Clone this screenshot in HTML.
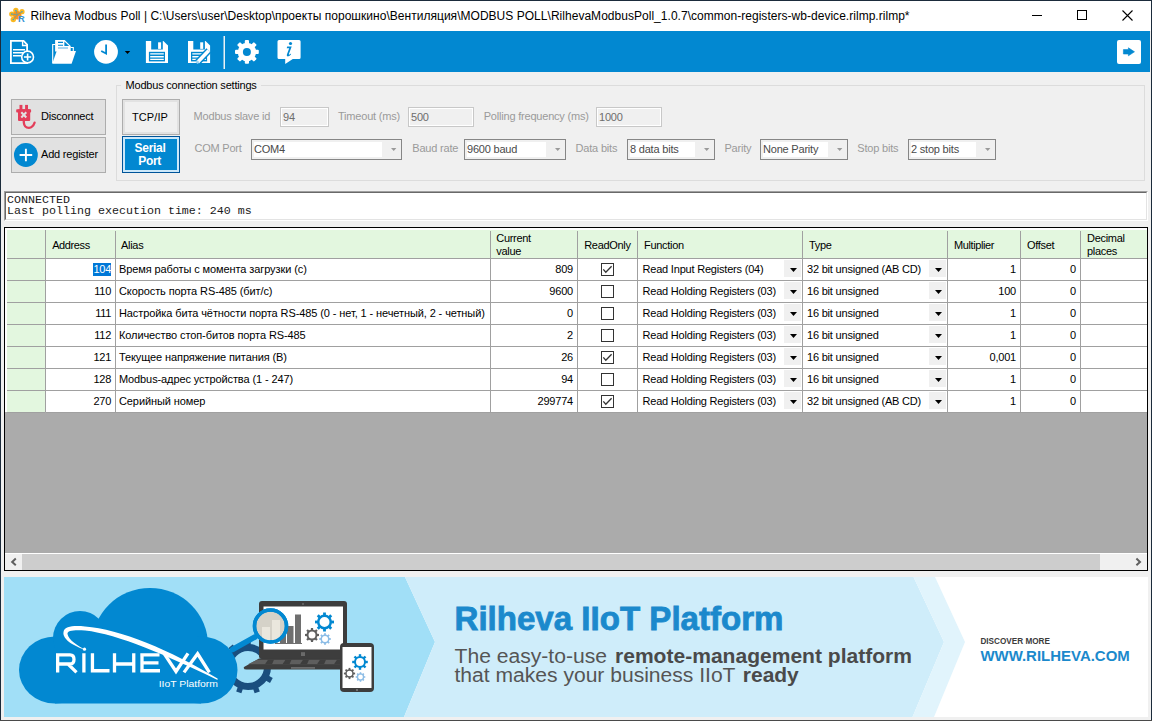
<!DOCTYPE html>
<html><head><meta charset="utf-8">
<style>
*{box-sizing:border-box;margin:0;padding:0}
html,body{width:1152px;height:721px;overflow:hidden;background:#F0F0F0}
body{position:relative;font-family:"Liberation Sans",sans-serif;font-size:11px;color:#000}
.a{position:absolute}
.t{position:absolute;white-space:nowrap}
svg{position:absolute;overflow:visible}
</style></head><body>
<div class="a" style="left:0px;top:0px;width:1152px;height:1px;background:#1b2b3b;"></div>
<div class="a" style="left:0px;top:0px;width:1px;height:721px;background:#1b2b3b;"></div>
<div class="a" style="left:1151px;top:0px;width:1px;height:721px;background:#1b2b3b;"></div>
<div class="a" style="left:0px;top:720px;width:1152px;height:1px;background:#4a4a4a;"></div>
<div class="a" style="left:1px;top:1px;width:1150px;height:30px;background:#fff;"></div>
<svg style="left:0;top:0" width="40" height="30" viewBox="0 0 40 30"><g fill="#FBB820"><circle cx="15.9" cy="10.5" r="2.7"/><circle cx="22" cy="11.7" r="2.6"/><circle cx="11.8" cy="14.1" r="2.7"/><circle cx="13.3" cy="19.5" r="2.7"/></g><g fill="#F7941D"><circle cx="17.3" cy="15.2" r="4.2"/></g><path d="M15.9 10.5 L17.3 14.8 L22 11.7 M11.8 14.1 L17.3 14.8 L13.3 19.5" stroke="#4A9FB8" stroke-width="0.7" fill="none"/><g fill="#4A9FB8"><circle cx="15.9" cy="10.5" r="0.8"/><circle cx="22" cy="11.7" r="0.8"/><circle cx="11.8" cy="14.1" r="0.8"/><circle cx="13.3" cy="19.5" r="0.8"/></g><text x="18" y="22" font-family="Liberation Sans" font-weight="700" font-size="8.2" fill="#3A95D5" textLength="6.8" lengthAdjust="spacingAndGlyphs">R</text></svg>
<div class="t" style="left:30.6px;top:9.64px;font-size:12px;line-height:12px;color:#000;letter-spacing:0.03px;">Rilheva Modbus Poll | C:\Users\user\Desktop\проекты порошкино\Вентиляция\MODBUS POLL\RilhevaModbusPoll_1.0.7\common-registers-wb-device.rilmp.rilmp*</div>
<div class="a" style="left:1032px;top:15px;width:10px;height:1px;background:#000;"></div>
<div class="a" style="left:1077px;top:10px;width:10px;height:10px;border:1px solid #000;"></div>
<svg style="left:1122px;top:10px" width="11" height="11"><path d="M0.5 0.5L10.5 10.5M10.5 0.5L0.5 10.5" stroke="#000" stroke-width="1.1"/></svg>
<div class="a" style="left:1px;top:31px;width:1149px;height:41px;background:#0288D1;"></div>
<div class="a" style="left:1117px;top:40px;width:24px;height:24px;background:#fff;border-radius:2px"></div>
<svg style="left:0;top:0" width="1152" height="72" viewBox="0 0 1152 72"><path d="M10.9 40.9 H23.6 L27.1 44.5 V63.1 H10.9 Z" fill="none" stroke="#fff" stroke-width="1.8"/><path d="M22.6 41 V45.5 H27" fill="none" stroke="#fff" stroke-width="1.4"/><path d="M13 49.8 H25 M13 52.8 H23 M13 55.8 H21.5" stroke="#fff" stroke-width="1.5"/><circle cx="27.6" cy="57" r="5.9" fill="#0288D1" stroke="#fff" stroke-width="1.6"/><path d="M24 57 H31.2 M27.6 53.6 V60.6" stroke="#fff" stroke-width="1.6"/><path d="M52.7 63 V44.5 H55.5 M70.5 47.5 H73.3 V51" fill="none" stroke="#fff" stroke-width="1.1"/><path d="M55.1 40 H64.7 L70.7 46 V51.5 H55.1 Z" fill="#fff"/><path d="M64.4 41.5 V46 H69.2 Z" fill="#0288D1"/><path d="M58 42.4 H63 M58 45.3 H63" stroke="#0288D1" stroke-width="1.1"/><path d="M58 48 H68" stroke="#7CC0E8" stroke-width="1.3"/><path d="M56.7 51.1 H76 L71.6 63.8 H52.2 Z" fill="#fff"/><circle cx="106" cy="51.8" r="11.9" fill="#fff"/><path d="M106.1 44.4 V53.6 L101.2 51" fill="none" stroke="#0288D1" stroke-width="1.8"/><path d="M124.8 51 H130.2 L127.5 54.1 Z" fill="#000"/><path d="M145.9 41 H163.4 L168 45.4 V63 H145.9 Z" fill="#fff"/><rect x="151.2" y="40.5" width="11.6" height="9" fill="#0288D1"/><rect x="158.1" y="42.3" width="3" height="6.6" fill="#fff"/><rect x="148.9" y="51.8" width="16.1" height="9.6" fill="#0288D1"/><path d="M150.2 53.9 H163.8 M150.2 56.7 H163.8 M150.2 59.4 H163.8" stroke="#fff" stroke-width="1.4"/><path d="M188.0 41 H205.5 L210.1 45.4 V63 H188.0 Z" fill="#fff"/><rect x="193.29999999999998" y="40.5" width="11.6" height="9" fill="#0288D1"/><rect x="200.2" y="42.3" width="3" height="6.6" fill="#fff"/><rect x="191.0" y="51.8" width="16.1" height="9.6" fill="#0288D1"/><path d="M192.29999999999998 53.9 H205.9 M192.29999999999998 56.7 H205.9 M192.29999999999998 59.4 H205.9" stroke="#fff" stroke-width="1.4"/><path d="M197.6 62.2 L208.8 50.6" stroke="#0288D1" stroke-width="6.5"/><path d="M197.6 62.2 L208.8 50.6" stroke="#fff" stroke-width="3.6"/><path d="M196.5 63.2 L198.4 61.2" stroke="#9FD3F0" stroke-width="2.5"/><rect x="223.5" y="36" width="1.5" height="33" fill="#EAF2F5"/><g><rect x="244.80" y="40.00" width="4.2" height="5" rx="1" fill="#fff" transform="rotate(0 246.9 51.9)"/><rect x="244.80" y="40.00" width="4.2" height="5" rx="1" fill="#fff" transform="rotate(45 246.9 51.9)"/><rect x="244.80" y="40.00" width="4.2" height="5" rx="1" fill="#fff" transform="rotate(90 246.9 51.9)"/><rect x="244.80" y="40.00" width="4.2" height="5" rx="1" fill="#fff" transform="rotate(135 246.9 51.9)"/><rect x="244.80" y="40.00" width="4.2" height="5" rx="1" fill="#fff" transform="rotate(180 246.9 51.9)"/><rect x="244.80" y="40.00" width="4.2" height="5" rx="1" fill="#fff" transform="rotate(225 246.9 51.9)"/><rect x="244.80" y="40.00" width="4.2" height="5" rx="1" fill="#fff" transform="rotate(270 246.9 51.9)"/><rect x="244.80" y="40.00" width="4.2" height="5" rx="1" fill="#fff" transform="rotate(315 246.9 51.9)"/><circle cx="246.9" cy="51.9" r="9.2" fill="#fff"/><circle cx="246.9" cy="51.9" r="4" fill="#0288D1"/></g><path d="M279 40 H299.1 Q300.6 40 300.6 41.5 V57.5 Q300.6 59 299.1 59 H292.8 L285.2 64 V59 H279 Q277.5 59 277.5 57.5 V41.5 Q277.5 40 279 40 Z" fill="#fff"/><circle cx="290.5" cy="43.5" r="1.6" fill="#0288D1"/><path d="M287.2 46.6 H291.7 L288.9 54.1 Q288.7 54.9 289.5 54.5 L291.1 53.5 L290.8 54.8 Q289.2 56.4 287.7 56.4 Q286.3 56.2 286.9 54.6 L289.2 48.2 H286.7 Z" fill="#0288D1"/><path d="M1123.4 49.6 H1128.4 V47.8 L1134.5 51.8 L1128.4 55.8 V54 H1123.4 Z" fill="#0288D1" stroke="#0288D1" stroke-width="0.6" stroke-linejoin="round"/></svg>
<div class="a" style="left:11px;top:99px;width:95px;height:36px;background:#E1E1E1;border:1px solid #ADADAD;"></div>
<div class="t" style="left:41px;top:110.99px;font-size:11px;line-height:11px;color:#000;letter-spacing:-0.2px;">Disconnect</div>
<div class="a" style="left:11px;top:137px;width:95px;height:36px;background:#E1E1E1;border:1px solid #ADADAD;"></div>
<div class="t" style="left:41px;top:149.09px;font-size:11px;line-height:11px;color:#000;letter-spacing:-0.2px;">Add register</div>
<svg style="left:0;top:0" width="60" height="180" viewBox="0 0 60 180"><g fill="#E33E5A"><rect x="19.5" y="104.9" width="2.9" height="5"/><rect x="25.1" y="104.9" width="2.9" height="5"/><rect x="16.2" y="109.3" width="14.9" height="3.3" rx="0.8"/><rect x="18" y="109.3" width="12.2" height="11.6" rx="1"/></g><path d="M21.3 112.3 L26.3 117.5 M26.3 112.3 L21.3 117.5" stroke="#E1E1E1" stroke-width="2"/><path d="M23.8 120.5 V122.5 Q24.2 127.8 28.9 127.9 Q32.8 127.6 34.6 122.6" fill="none" stroke="#E33E5A" stroke-width="2.3" stroke-linecap="round"/><circle cx="25.9" cy="155" r="11.9" fill="#0288D1"/><path d="M19.6 155 H32.2 M25.9 148.7 V161.3" stroke="#fff" stroke-width="1.9"/></svg>
<div class="a" style="left:116px;top:85px;width:1029px;height:96px;border:1px solid #DCDCDC;"></div>
<div class="a" style="left:121px;top:80px;width:140px;height:10px;background:#F0F0F0;"></div>
<div class="t" style="left:125.5px;top:80.29px;font-size:11px;line-height:11px;color:#000;letter-spacing:-0.2px;">Modbus connection settings</div>
<div class="a" style="left:122px;top:99px;width:58px;height:36px;background:#F0F0F0;border:1px solid #ADADAD;"></div>
<div class="a" style="left:123px;top:100px;width:56px;height:34px;border:2px solid #E2E2E2;"></div>
<div class="t" style="left:132px;top:112.39px;font-size:11px;line-height:11px;color:#000;letter-spacing:0.1px;">TCP/IP</div>
<div class="a" style="left:122px;top:136px;width:58px;height:37px;background:#0288D1;border:1px solid #005499;"></div>
<div class="a" style="left:123px;top:137px;width:56px;height:35px;border:2px solid #CCE8FA;"></div>
<div class="t" style="left:134.6px;top:141.74px;font-size:12px;line-height:12px;color:#fff;letter-spacing:-0.3px;font-weight:700;">Serial</div>
<div class="t" style="left:138.2px;top:154.54px;font-size:12px;line-height:12px;color:#fff;letter-spacing:-0.3px;font-weight:700;">Port</div>
<div class="t" style="left:193.6px;top:111.49px;font-size:11px;line-height:11px;color:#9a9a9a;letter-spacing:-0.2px;">Modbus slave id</div>
<div class="a" style="left:280px;top:107px;width:49px;height:20px;background:#F0F0F0;border:1px solid #C8C8C8;"></div>
<div class="a" style="left:281px;top:108px;width:47px;height:18px;border:1px solid #FFFFFF;"></div>
<div class="t" style="left:283px;top:111.69px;font-size:11px;line-height:11px;color:#6D6D6D;letter-spacing:-0.2px;">94</div>
<div class="t" style="left:338px;top:111.49px;font-size:11px;line-height:11px;color:#9a9a9a;letter-spacing:-0.2px;">Timeout (ms)</div>
<div class="a" style="left:408px;top:107px;width:66px;height:20px;background:#F0F0F0;border:1px solid #C8C8C8;"></div>
<div class="a" style="left:409px;top:108px;width:64px;height:18px;border:1px solid #FFFFFF;"></div>
<div class="t" style="left:411px;top:111.69px;font-size:11px;line-height:11px;color:#6D6D6D;letter-spacing:-0.2px;">500</div>
<div class="t" style="left:483.7px;top:111.49px;font-size:11px;line-height:11px;color:#9a9a9a;letter-spacing:-0.2px;">Polling frequency (ms)</div>
<div class="a" style="left:596px;top:107px;width:66px;height:20px;background:#F0F0F0;border:1px solid #C8C8C8;"></div>
<div class="a" style="left:597px;top:108px;width:64px;height:18px;border:1px solid #FFFFFF;"></div>
<div class="t" style="left:599px;top:111.69px;font-size:11px;line-height:11px;color:#6D6D6D;letter-spacing:-0.2px;">1000</div>
<div class="t" style="left:194.4px;top:143.49px;font-size:11px;line-height:11px;color:#9a9a9a;letter-spacing:-0.2px;">COM Port</div>
<div class="a" style="left:251px;top:139px;width:151px;height:21px;background:#F0F0F0;border:1px solid #868686;"></div>
<div class="a" style="left:254px;top:142px;width:128px;height:15px;background:#fff;"></div>
<svg style="left:390.8px;top:148px" width="6" height="4"><path d="M0 0H5.4L2.7 3Z" fill="#9a9a9a"/></svg>
<div class="t" style="left:254px;top:144.39px;font-size:11px;line-height:11px;color:#4a4a4a;letter-spacing:-0.2px;">COM4</div>
<div class="t" style="left:412.3px;top:143.49px;font-size:11px;line-height:11px;color:#9a9a9a;letter-spacing:-0.2px;">Baud rate</div>
<div class="a" style="left:464px;top:139px;width:102px;height:21px;background:#F0F0F0;border:1px solid #868686;"></div>
<div class="a" style="left:467px;top:142px;width:79px;height:15px;background:#fff;"></div>
<svg style="left:554.8px;top:148px" width="6" height="4"><path d="M0 0H5.4L2.7 3Z" fill="#9a9a9a"/></svg>
<div class="t" style="left:467px;top:144.39px;font-size:11px;line-height:11px;color:#4a4a4a;letter-spacing:-0.2px;">9600 baud</div>
<div class="t" style="left:575.6px;top:143.49px;font-size:11px;line-height:11px;color:#9a9a9a;letter-spacing:-0.2px;">Data bits</div>
<div class="a" style="left:627px;top:139px;width:88px;height:21px;background:#F0F0F0;border:1px solid #868686;"></div>
<div class="a" style="left:630px;top:142px;width:65px;height:15px;background:#fff;"></div>
<svg style="left:703.8px;top:148px" width="6" height="4"><path d="M0 0H5.4L2.7 3Z" fill="#9a9a9a"/></svg>
<div class="t" style="left:630px;top:144.39px;font-size:11px;line-height:11px;color:#4a4a4a;letter-spacing:-0.2px;">8 data bits</div>
<div class="t" style="left:724.4px;top:143.49px;font-size:11px;line-height:11px;color:#9a9a9a;letter-spacing:-0.2px;">Parity</div>
<div class="a" style="left:760px;top:139px;width:88px;height:21px;background:#F0F0F0;border:1px solid #868686;"></div>
<div class="a" style="left:763px;top:142px;width:65px;height:15px;background:#fff;"></div>
<svg style="left:836.8px;top:148px" width="6" height="4"><path d="M0 0H5.4L2.7 3Z" fill="#9a9a9a"/></svg>
<div class="t" style="left:763px;top:144.39px;font-size:11px;line-height:11px;color:#4a4a4a;letter-spacing:-0.2px;">None Parity</div>
<div class="t" style="left:857.3px;top:143.49px;font-size:11px;line-height:11px;color:#9a9a9a;letter-spacing:-0.2px;">Stop bits</div>
<div class="a" style="left:908px;top:139px;width:88px;height:21px;background:#F0F0F0;border:1px solid #868686;"></div>
<div class="a" style="left:911px;top:142px;width:65px;height:15px;background:#fff;"></div>
<svg style="left:984.8px;top:148px" width="6" height="4"><path d="M0 0H5.4L2.7 3Z" fill="#9a9a9a"/></svg>
<div class="t" style="left:911px;top:144.39px;font-size:11px;line-height:11px;color:#4a4a4a;letter-spacing:-0.2px;">2 stop bits</div>
<div class="a" style="left:4px;top:191px;width:1144px;height:30px;background:#fff;border-top:1px solid #A0A0A0;border-left:1px solid #A0A0A0;border-right:1px solid #FFFFFF;border-bottom:1px solid #FFFFFF"></div>
<div class="a" style="left:5px;top:192px;width:1142px;height:28px;border-top:1px solid #696969;border-left:1px solid #696969;border-right:1px solid #E3E3E3;border-bottom:1px solid #E3E3E3"></div>
<div class="t" style="left:7px;top:195.3px;font-family:'Liberation Mono',monospace;font-size:11.67px;line-height:11px;white-space:pre;color:#1a1a1a">CONNECTED
Last polling execution time: 240 ms</div>
<div class="a" style="left:4px;top:227px;width:1144px;height:344px;background:#ABABAB;border:1px solid #000;"></div>
<div class="a" style="left:5px;top:228px;width:1142px;height:30px;background:#E3F7DF;"></div>
<div class="a" style="left:5px;top:258px;width:1142px;height:1px;background:#A0A0A0;"></div>
<div class="a" style="left:5px;top:228px;width:1142px;height:2px;background:#fff;"></div>
<div class="a" style="left:5px;top:228px;width:2px;height:184px;background:#fff;"></div>
<div class="a" style="left:45px;top:231px;width:1px;height:27px;background:#A0A0A0;"></div>
<div class="a" style="left:115px;top:231px;width:1px;height:27px;background:#A0A0A0;"></div>
<div class="a" style="left:490px;top:231px;width:1px;height:27px;background:#A0A0A0;"></div>
<div class="a" style="left:577px;top:231px;width:1px;height:27px;background:#A0A0A0;"></div>
<div class="a" style="left:637px;top:231px;width:1px;height:27px;background:#A0A0A0;"></div>
<div class="a" style="left:802px;top:231px;width:1px;height:27px;background:#A0A0A0;"></div>
<div class="a" style="left:947px;top:231px;width:1px;height:27px;background:#A0A0A0;"></div>
<div class="a" style="left:1020px;top:231px;width:1px;height:27px;background:#A0A0A0;"></div>
<div class="a" style="left:1080px;top:231px;width:1px;height:27px;background:#A0A0A0;"></div>
<div class="a" style="left:7px;top:259px;width:38px;height:153px;background:#E3F7DF;"></div>
<div class="a" style="left:45px;top:230px;width:1px;height:182px;background:#A0A0A0;"></div>
<div class="a" style="left:46px;top:259px;width:1101px;height:21px;background:#fff;"></div>
<div class="a" style="left:46px;top:280px;width:1101px;height:1px;background:#A0A0A0;"></div>
<div class="a" style="left:7px;top:280px;width:38px;height:1px;background:#A0A0A0;"></div>
<div class="a" style="left:115px;top:259px;width:1px;height:22px;background:#A0A0A0;"></div>
<div class="a" style="left:490px;top:259px;width:1px;height:22px;background:#A0A0A0;"></div>
<div class="a" style="left:577px;top:259px;width:1px;height:22px;background:#A0A0A0;"></div>
<div class="a" style="left:637px;top:259px;width:1px;height:22px;background:#A0A0A0;"></div>
<div class="a" style="left:802px;top:259px;width:1px;height:22px;background:#A0A0A0;"></div>
<div class="a" style="left:947px;top:259px;width:1px;height:22px;background:#A0A0A0;"></div>
<div class="a" style="left:1020px;top:259px;width:1px;height:22px;background:#A0A0A0;"></div>
<div class="a" style="left:1080px;top:259px;width:1px;height:22px;background:#A0A0A0;"></div>
<div class="a" style="left:93px;top:263px;width:18px;height:13px;background:#0078D7;"></div>
<div class="t" style="right:1041px;top:264.39px;font-size:11px;line-height:11px;color:#fff;letter-spacing:-0.3px;">104</div>
<div class="t" style="left:119px;top:264.39px;font-size:11px;line-height:11px;color:#000;letter-spacing:-0.1px;">Время работы с момента загрузки (с)</div>
<div class="t" style="right:579px;top:264.39px;font-size:11px;line-height:11px;color:#000;letter-spacing:-0.2px;">809</div>
<div class="a" style="left:601px;top:263px;width:13px;height:13px;background:#fff;border:1px solid #333;"></div>
<svg style="left:601px;top:263px" width="13" height="13"><path d="M2.3 6.4L4.8 9.2L10.6 3.2" fill="none" stroke="#333" stroke-width="1.3"/></svg>
<div class="t" style="left:642.5px;top:264.39px;font-size:11px;line-height:11px;color:#000;letter-spacing:-0.2px;">Read Input Registers (04)</div>
<div class="a" style="left:784px;top:260px;width:17px;height:17px;background:#F0F0F0;"></div>
<svg style="left:789.8px;top:268px" width="7" height="4"><path d="M0 0H7L3.5 4Z" fill="#000"/></svg>
<div class="t" style="left:807px;top:264.39px;font-size:11px;line-height:11px;color:#000;letter-spacing:-0.2px;">32 bit unsigned (AB CD)</div>
<div class="a" style="left:929px;top:260px;width:17px;height:17px;background:#F0F0F0;"></div>
<svg style="left:934.8px;top:268px" width="7" height="4"><path d="M0 0H7L3.5 4Z" fill="#000"/></svg>
<div class="t" style="right:136px;top:264.39px;font-size:11px;line-height:11px;color:#000;letter-spacing:-0.2px;">1</div>
<div class="t" style="right:76px;top:264.39px;font-size:11px;line-height:11px;color:#000;letter-spacing:-0.2px;">0</div>
<div class="a" style="left:46px;top:281px;width:1101px;height:21px;background:#fff;"></div>
<div class="a" style="left:46px;top:302px;width:1101px;height:1px;background:#A0A0A0;"></div>
<div class="a" style="left:7px;top:302px;width:38px;height:1px;background:#A0A0A0;"></div>
<div class="a" style="left:115px;top:281px;width:1px;height:22px;background:#A0A0A0;"></div>
<div class="a" style="left:490px;top:281px;width:1px;height:22px;background:#A0A0A0;"></div>
<div class="a" style="left:577px;top:281px;width:1px;height:22px;background:#A0A0A0;"></div>
<div class="a" style="left:637px;top:281px;width:1px;height:22px;background:#A0A0A0;"></div>
<div class="a" style="left:802px;top:281px;width:1px;height:22px;background:#A0A0A0;"></div>
<div class="a" style="left:947px;top:281px;width:1px;height:22px;background:#A0A0A0;"></div>
<div class="a" style="left:1020px;top:281px;width:1px;height:22px;background:#A0A0A0;"></div>
<div class="a" style="left:1080px;top:281px;width:1px;height:22px;background:#A0A0A0;"></div>
<div class="t" style="right:1041px;top:286.39px;font-size:11px;line-height:11px;color:#000;letter-spacing:-0.3px;">110</div>
<div class="t" style="left:119px;top:286.39px;font-size:11px;line-height:11px;color:#000;letter-spacing:-0.1px;">Скорость порта RS-485 (бит/с)</div>
<div class="t" style="right:579px;top:286.39px;font-size:11px;line-height:11px;color:#000;letter-spacing:-0.2px;">9600</div>
<div class="a" style="left:601px;top:285px;width:13px;height:13px;background:#fff;border:1px solid #333;"></div>
<div class="t" style="left:642.5px;top:286.39px;font-size:11px;line-height:11px;color:#000;letter-spacing:-0.2px;">Read Holding Registers (03)</div>
<div class="a" style="left:784px;top:282px;width:17px;height:17px;background:#F0F0F0;"></div>
<svg style="left:789.8px;top:290px" width="7" height="4"><path d="M0 0H7L3.5 4Z" fill="#000"/></svg>
<div class="t" style="left:807px;top:286.39px;font-size:11px;line-height:11px;color:#000;letter-spacing:-0.2px;">16 bit unsigned</div>
<div class="a" style="left:929px;top:282px;width:17px;height:17px;background:#F0F0F0;"></div>
<svg style="left:934.8px;top:290px" width="7" height="4"><path d="M0 0H7L3.5 4Z" fill="#000"/></svg>
<div class="t" style="right:136px;top:286.39px;font-size:11px;line-height:11px;color:#000;letter-spacing:-0.2px;">100</div>
<div class="t" style="right:76px;top:286.39px;font-size:11px;line-height:11px;color:#000;letter-spacing:-0.2px;">0</div>
<div class="a" style="left:46px;top:303px;width:1101px;height:21px;background:#fff;"></div>
<div class="a" style="left:46px;top:324px;width:1101px;height:1px;background:#A0A0A0;"></div>
<div class="a" style="left:7px;top:324px;width:38px;height:1px;background:#A0A0A0;"></div>
<div class="a" style="left:115px;top:303px;width:1px;height:22px;background:#A0A0A0;"></div>
<div class="a" style="left:490px;top:303px;width:1px;height:22px;background:#A0A0A0;"></div>
<div class="a" style="left:577px;top:303px;width:1px;height:22px;background:#A0A0A0;"></div>
<div class="a" style="left:637px;top:303px;width:1px;height:22px;background:#A0A0A0;"></div>
<div class="a" style="left:802px;top:303px;width:1px;height:22px;background:#A0A0A0;"></div>
<div class="a" style="left:947px;top:303px;width:1px;height:22px;background:#A0A0A0;"></div>
<div class="a" style="left:1020px;top:303px;width:1px;height:22px;background:#A0A0A0;"></div>
<div class="a" style="left:1080px;top:303px;width:1px;height:22px;background:#A0A0A0;"></div>
<div class="t" style="right:1041px;top:308.39px;font-size:11px;line-height:11px;color:#000;letter-spacing:-0.3px;">111</div>
<div class="t" style="left:119px;top:308.39px;font-size:11px;line-height:11px;color:#000;letter-spacing:-0.1px;">Настройка бита чётности порта RS-485 (0 - нет, 1 - нечетный, 2 - четный)</div>
<div class="t" style="right:579px;top:308.39px;font-size:11px;line-height:11px;color:#000;letter-spacing:-0.2px;">0</div>
<div class="a" style="left:601px;top:307px;width:13px;height:13px;background:#fff;border:1px solid #333;"></div>
<div class="t" style="left:642.5px;top:308.39px;font-size:11px;line-height:11px;color:#000;letter-spacing:-0.2px;">Read Holding Registers (03)</div>
<div class="a" style="left:784px;top:304px;width:17px;height:17px;background:#F0F0F0;"></div>
<svg style="left:789.8px;top:312px" width="7" height="4"><path d="M0 0H7L3.5 4Z" fill="#000"/></svg>
<div class="t" style="left:807px;top:308.39px;font-size:11px;line-height:11px;color:#000;letter-spacing:-0.2px;">16 bit unsigned</div>
<div class="a" style="left:929px;top:304px;width:17px;height:17px;background:#F0F0F0;"></div>
<svg style="left:934.8px;top:312px" width="7" height="4"><path d="M0 0H7L3.5 4Z" fill="#000"/></svg>
<div class="t" style="right:136px;top:308.39px;font-size:11px;line-height:11px;color:#000;letter-spacing:-0.2px;">1</div>
<div class="t" style="right:76px;top:308.39px;font-size:11px;line-height:11px;color:#000;letter-spacing:-0.2px;">0</div>
<div class="a" style="left:46px;top:325px;width:1101px;height:21px;background:#fff;"></div>
<div class="a" style="left:46px;top:346px;width:1101px;height:1px;background:#A0A0A0;"></div>
<div class="a" style="left:7px;top:346px;width:38px;height:1px;background:#A0A0A0;"></div>
<div class="a" style="left:115px;top:325px;width:1px;height:22px;background:#A0A0A0;"></div>
<div class="a" style="left:490px;top:325px;width:1px;height:22px;background:#A0A0A0;"></div>
<div class="a" style="left:577px;top:325px;width:1px;height:22px;background:#A0A0A0;"></div>
<div class="a" style="left:637px;top:325px;width:1px;height:22px;background:#A0A0A0;"></div>
<div class="a" style="left:802px;top:325px;width:1px;height:22px;background:#A0A0A0;"></div>
<div class="a" style="left:947px;top:325px;width:1px;height:22px;background:#A0A0A0;"></div>
<div class="a" style="left:1020px;top:325px;width:1px;height:22px;background:#A0A0A0;"></div>
<div class="a" style="left:1080px;top:325px;width:1px;height:22px;background:#A0A0A0;"></div>
<div class="t" style="right:1041px;top:330.39px;font-size:11px;line-height:11px;color:#000;letter-spacing:-0.3px;">112</div>
<div class="t" style="left:119px;top:330.39px;font-size:11px;line-height:11px;color:#000;letter-spacing:-0.1px;">Количество стоп-битов порта RS-485</div>
<div class="t" style="right:579px;top:330.39px;font-size:11px;line-height:11px;color:#000;letter-spacing:-0.2px;">2</div>
<div class="a" style="left:601px;top:329px;width:13px;height:13px;background:#fff;border:1px solid #333;"></div>
<div class="t" style="left:642.5px;top:330.39px;font-size:11px;line-height:11px;color:#000;letter-spacing:-0.2px;">Read Holding Registers (03)</div>
<div class="a" style="left:784px;top:326px;width:17px;height:17px;background:#F0F0F0;"></div>
<svg style="left:789.8px;top:334px" width="7" height="4"><path d="M0 0H7L3.5 4Z" fill="#000"/></svg>
<div class="t" style="left:807px;top:330.39px;font-size:11px;line-height:11px;color:#000;letter-spacing:-0.2px;">16 bit unsigned</div>
<div class="a" style="left:929px;top:326px;width:17px;height:17px;background:#F0F0F0;"></div>
<svg style="left:934.8px;top:334px" width="7" height="4"><path d="M0 0H7L3.5 4Z" fill="#000"/></svg>
<div class="t" style="right:136px;top:330.39px;font-size:11px;line-height:11px;color:#000;letter-spacing:-0.2px;">1</div>
<div class="t" style="right:76px;top:330.39px;font-size:11px;line-height:11px;color:#000;letter-spacing:-0.2px;">0</div>
<div class="a" style="left:46px;top:347px;width:1101px;height:21px;background:#fff;"></div>
<div class="a" style="left:46px;top:368px;width:1101px;height:1px;background:#A0A0A0;"></div>
<div class="a" style="left:7px;top:368px;width:38px;height:1px;background:#A0A0A0;"></div>
<div class="a" style="left:115px;top:347px;width:1px;height:22px;background:#A0A0A0;"></div>
<div class="a" style="left:490px;top:347px;width:1px;height:22px;background:#A0A0A0;"></div>
<div class="a" style="left:577px;top:347px;width:1px;height:22px;background:#A0A0A0;"></div>
<div class="a" style="left:637px;top:347px;width:1px;height:22px;background:#A0A0A0;"></div>
<div class="a" style="left:802px;top:347px;width:1px;height:22px;background:#A0A0A0;"></div>
<div class="a" style="left:947px;top:347px;width:1px;height:22px;background:#A0A0A0;"></div>
<div class="a" style="left:1020px;top:347px;width:1px;height:22px;background:#A0A0A0;"></div>
<div class="a" style="left:1080px;top:347px;width:1px;height:22px;background:#A0A0A0;"></div>
<div class="t" style="right:1041px;top:352.39px;font-size:11px;line-height:11px;color:#000;letter-spacing:-0.3px;">121</div>
<div class="t" style="left:119px;top:352.39px;font-size:11px;line-height:11px;color:#000;letter-spacing:-0.1px;">Текущее напряжение питания (В)</div>
<div class="t" style="right:579px;top:352.39px;font-size:11px;line-height:11px;color:#000;letter-spacing:-0.2px;">26</div>
<div class="a" style="left:601px;top:351px;width:13px;height:13px;background:#fff;border:1px solid #333;"></div>
<svg style="left:601px;top:351px" width="13" height="13"><path d="M2.3 6.4L4.8 9.2L10.6 3.2" fill="none" stroke="#333" stroke-width="1.3"/></svg>
<div class="t" style="left:642.5px;top:352.39px;font-size:11px;line-height:11px;color:#000;letter-spacing:-0.2px;">Read Holding Registers (03)</div>
<div class="a" style="left:784px;top:348px;width:17px;height:17px;background:#F0F0F0;"></div>
<svg style="left:789.8px;top:356px" width="7" height="4"><path d="M0 0H7L3.5 4Z" fill="#000"/></svg>
<div class="t" style="left:807px;top:352.39px;font-size:11px;line-height:11px;color:#000;letter-spacing:-0.2px;">16 bit unsigned</div>
<div class="a" style="left:929px;top:348px;width:17px;height:17px;background:#F0F0F0;"></div>
<svg style="left:934.8px;top:356px" width="7" height="4"><path d="M0 0H7L3.5 4Z" fill="#000"/></svg>
<div class="t" style="right:136px;top:352.39px;font-size:11px;line-height:11px;color:#000;letter-spacing:-0.2px;">0,001</div>
<div class="t" style="right:76px;top:352.39px;font-size:11px;line-height:11px;color:#000;letter-spacing:-0.2px;">0</div>
<div class="a" style="left:46px;top:369px;width:1101px;height:21px;background:#fff;"></div>
<div class="a" style="left:46px;top:390px;width:1101px;height:1px;background:#A0A0A0;"></div>
<div class="a" style="left:7px;top:390px;width:38px;height:1px;background:#A0A0A0;"></div>
<div class="a" style="left:115px;top:369px;width:1px;height:22px;background:#A0A0A0;"></div>
<div class="a" style="left:490px;top:369px;width:1px;height:22px;background:#A0A0A0;"></div>
<div class="a" style="left:577px;top:369px;width:1px;height:22px;background:#A0A0A0;"></div>
<div class="a" style="left:637px;top:369px;width:1px;height:22px;background:#A0A0A0;"></div>
<div class="a" style="left:802px;top:369px;width:1px;height:22px;background:#A0A0A0;"></div>
<div class="a" style="left:947px;top:369px;width:1px;height:22px;background:#A0A0A0;"></div>
<div class="a" style="left:1020px;top:369px;width:1px;height:22px;background:#A0A0A0;"></div>
<div class="a" style="left:1080px;top:369px;width:1px;height:22px;background:#A0A0A0;"></div>
<div class="t" style="right:1041px;top:374.39px;font-size:11px;line-height:11px;color:#000;letter-spacing:-0.3px;">128</div>
<div class="t" style="left:119px;top:374.39px;font-size:11px;line-height:11px;color:#000;letter-spacing:-0.1px;">Modbus-адрес устройства (1 - 247)</div>
<div class="t" style="right:579px;top:374.39px;font-size:11px;line-height:11px;color:#000;letter-spacing:-0.2px;">94</div>
<div class="a" style="left:601px;top:373px;width:13px;height:13px;background:#fff;border:1px solid #333;"></div>
<div class="t" style="left:642.5px;top:374.39px;font-size:11px;line-height:11px;color:#000;letter-spacing:-0.2px;">Read Holding Registers (03)</div>
<div class="a" style="left:784px;top:370px;width:17px;height:17px;background:#F0F0F0;"></div>
<svg style="left:789.8px;top:378px" width="7" height="4"><path d="M0 0H7L3.5 4Z" fill="#000"/></svg>
<div class="t" style="left:807px;top:374.39px;font-size:11px;line-height:11px;color:#000;letter-spacing:-0.2px;">16 bit unsigned</div>
<div class="a" style="left:929px;top:370px;width:17px;height:17px;background:#F0F0F0;"></div>
<svg style="left:934.8px;top:378px" width="7" height="4"><path d="M0 0H7L3.5 4Z" fill="#000"/></svg>
<div class="t" style="right:136px;top:374.39px;font-size:11px;line-height:11px;color:#000;letter-spacing:-0.2px;">1</div>
<div class="t" style="right:76px;top:374.39px;font-size:11px;line-height:11px;color:#000;letter-spacing:-0.2px;">0</div>
<div class="a" style="left:46px;top:391px;width:1101px;height:21px;background:#fff;"></div>
<div class="a" style="left:46px;top:412px;width:1101px;height:1px;background:#A0A0A0;"></div>
<div class="a" style="left:7px;top:412px;width:38px;height:1px;background:#A0A0A0;"></div>
<div class="a" style="left:115px;top:391px;width:1px;height:22px;background:#A0A0A0;"></div>
<div class="a" style="left:490px;top:391px;width:1px;height:22px;background:#A0A0A0;"></div>
<div class="a" style="left:577px;top:391px;width:1px;height:22px;background:#A0A0A0;"></div>
<div class="a" style="left:637px;top:391px;width:1px;height:22px;background:#A0A0A0;"></div>
<div class="a" style="left:802px;top:391px;width:1px;height:22px;background:#A0A0A0;"></div>
<div class="a" style="left:947px;top:391px;width:1px;height:22px;background:#A0A0A0;"></div>
<div class="a" style="left:1020px;top:391px;width:1px;height:22px;background:#A0A0A0;"></div>
<div class="a" style="left:1080px;top:391px;width:1px;height:22px;background:#A0A0A0;"></div>
<div class="t" style="right:1041px;top:396.39px;font-size:11px;line-height:11px;color:#000;letter-spacing:-0.3px;">270</div>
<div class="t" style="left:119px;top:396.39px;font-size:11px;line-height:11px;color:#000;letter-spacing:-0.1px;">Серийный номер</div>
<div class="t" style="right:579px;top:396.39px;font-size:11px;line-height:11px;color:#000;letter-spacing:-0.2px;">299774</div>
<div class="a" style="left:601px;top:395px;width:13px;height:13px;background:#fff;border:1px solid #333;"></div>
<svg style="left:601px;top:395px" width="13" height="13"><path d="M2.3 6.4L4.8 9.2L10.6 3.2" fill="none" stroke="#333" stroke-width="1.3"/></svg>
<div class="t" style="left:642.5px;top:396.39px;font-size:11px;line-height:11px;color:#000;letter-spacing:-0.2px;">Read Holding Registers (03)</div>
<div class="a" style="left:784px;top:392px;width:17px;height:17px;background:#F0F0F0;"></div>
<svg style="left:789.8px;top:400px" width="7" height="4"><path d="M0 0H7L3.5 4Z" fill="#000"/></svg>
<div class="t" style="left:807px;top:396.39px;font-size:11px;line-height:11px;color:#000;letter-spacing:-0.2px;">32 bit unsigned (AB CD)</div>
<div class="a" style="left:929px;top:392px;width:17px;height:17px;background:#F0F0F0;"></div>
<svg style="left:934.8px;top:400px" width="7" height="4"><path d="M0 0H7L3.5 4Z" fill="#000"/></svg>
<div class="t" style="right:136px;top:396.39px;font-size:11px;line-height:11px;color:#000;letter-spacing:-0.2px;">1</div>
<div class="t" style="right:76px;top:396.39px;font-size:11px;line-height:11px;color:#000;letter-spacing:-0.2px;">0</div>
<div class="t" style="left:52.2px;top:239.59px;font-size:11px;line-height:11px;color:#000;letter-spacing:-0.4px;">Address</div>
<div class="t" style="left:121px;top:239.59px;font-size:11px;line-height:11px;color:#000;letter-spacing:-0.3px;">Alias</div>
<div class="t" style="left:496.3px;top:233.29px;font-size:11px;line-height:11px;color:#000;letter-spacing:-0.3px;">Current</div>
<div class="t" style="left:496.3px;top:245.99px;font-size:11px;line-height:11px;color:#000;letter-spacing:-0.3px;">value</div>
<div class="t" style="left:584.2px;top:239.59px;font-size:11px;line-height:11px;color:#000;letter-spacing:-0.3px;">ReadOnly</div>
<div class="t" style="left:644px;top:239.59px;font-size:11px;line-height:11px;color:#000;letter-spacing:-0.3px;">Function</div>
<div class="t" style="left:809px;top:239.59px;font-size:11px;line-height:11px;color:#000;letter-spacing:-0.3px;">Type</div>
<div class="t" style="left:954px;top:239.59px;font-size:11px;line-height:11px;color:#000;letter-spacing:-0.4px;">Multiplier</div>
<div class="t" style="left:1027px;top:239.59px;font-size:11px;line-height:11px;color:#000;letter-spacing:-0.3px;">Offset</div>
<div class="t" style="left:1087px;top:233.29px;font-size:11px;line-height:11px;color:#000;letter-spacing:-0.3px;">Decimal</div>
<div class="t" style="left:1087px;top:245.99px;font-size:11px;line-height:11px;color:#000;letter-spacing:-0.3px;">places</div>
<div class="a" style="left:5px;top:553px;width:1142px;height:1px;background:#fff;"></div>
<div class="a" style="left:5px;top:554px;width:1142px;height:16px;background:#F0F0F0;"></div>
<div class="a" style="left:22px;top:554px;width:1078px;height:16px;background:#CDCDCD;"></div>
<svg style="left:10px;top:558px" width="8" height="8"><path d="M5.8 0.6L2.2 3.9L5.8 7.2" fill="none" stroke="#606060" stroke-width="2"/></svg>
<svg style="left:1135px;top:558px" width="8" height="8"><path d="M1.4 0.6L5 3.9L1.4 7.2" fill="none" stroke="#606060" stroke-width="2"/></svg>
<svg style="left:4px;top:577px" width="1144" height="140" viewBox="4 577 1144 140"><rect x="4" y="577" width="1144" height="140" fill="#fff"/><polygon points="4,577 405,577 435,642 404,717 4,717" fill="#A1DFF7"/><polygon points="405,577 913.5,577 944,642 912.5,717 404,717 435,642" fill="#CFEDFA"/><polygon points="913.5,577 935,577 965,642 934,717 912.5,717 944,642" fill="#E1F4FC"/><circle cx="248" cy="667" r="19.50" fill="none" stroke="#1A4E7E" stroke-width="7.00"/><rect x="245.25" y="640.00" width="5.50" height="5.00" fill="#1A4E7E" transform="rotate(0.0 248 667)"/><rect x="245.25" y="640.00" width="5.50" height="5.00" fill="#1A4E7E" transform="rotate(40.0 248 667)"/><rect x="245.25" y="640.00" width="5.50" height="5.00" fill="#1A4E7E" transform="rotate(80.0 248 667)"/><rect x="245.25" y="640.00" width="5.50" height="5.00" fill="#1A4E7E" transform="rotate(120.0 248 667)"/><rect x="245.25" y="640.00" width="5.50" height="5.00" fill="#1A4E7E" transform="rotate(160.0 248 667)"/><rect x="245.25" y="640.00" width="5.50" height="5.00" fill="#1A4E7E" transform="rotate(200.0 248 667)"/><rect x="245.25" y="640.00" width="5.50" height="5.00" fill="#1A4E7E" transform="rotate(240.0 248 667)"/><rect x="245.25" y="640.00" width="5.50" height="5.00" fill="#1A4E7E" transform="rotate(280.0 248 667)"/><rect x="245.25" y="640.00" width="5.50" height="5.00" fill="#1A4E7E" transform="rotate(320.0 248 667)"/><g fill="#0288D1"><ellipse cx="55" cy="670" rx="36" ry="33.5"/><circle cx="80" cy="638" r="27"/><ellipse cx="150" cy="645" rx="58" ry="57"/><ellipse cx="201" cy="670" rx="36.5" ry="33.5"/><rect x="55" y="637" width="146" height="66.5"/></g><path d="M86 650 C76 647 62 640 63.5 632 C64.5 626 74 625.5 85 626.5 C120 629 170 650 217.5 678.5 Q218.5 680 216.5 679.5 C168 656 118 634 85 630.5 C74 629.8 67 630.5 67.5 634 C68.5 640 78 646 86 650 Z" fill="#fff"/><circle cx="84.5" cy="649.2" r="1.6" fill="#fff"/><path d="M57.65 672.4 V654.95 H70 Q74 654.95 74 659.5 Q74 664 70 664 H57.65 M68 664 L76.5 672.4 M83.9 653.3 V672.4 M92.45 653.3 V670.75 H109.5 M114.5 653.3 V672.4 M133.75 653.3 V672.4 M114.5 664 H133.75 M142 653.3 V672.4 M140.3 654.95 H159.5 M142 662.8 H158.5 M140.3 670.75 H160 M164 653.3 L176 671.5 L188 653.3 M184 672.4 L197.6 653.8 L209.4 672.4" fill="none" stroke="#fff" stroke-width="3.3" stroke-linejoin="miter"/><text x="158.7" y="686.8" font-family="Liberation Sans" font-size="9.3" fill="#fff" textLength="59.3" lengthAdjust="spacingAndGlyphs">IIoT Platform</text><rect x="259" y="601" width="88" height="58" rx="3" fill="#3D3D3D"/><rect x="263.5" y="606.5" width="79.5" height="43" fill="#fff"/><rect x="301" y="652.2" width="4" height="3.8" fill="#6A6A6A"/><circle cx="303" cy="604" r="0.8" fill="#888"/><path d="M259 658.6 H350 V669.5 H246.5 Q243 669.5 244 667 Z" fill="#3D3D3D"/><path d="M257 659.8 H350 V664.3 H248 Z" fill="#5E5E5E"/><path d="M268 659.8 H274 L272 664.3 H265 Z" fill="#3D3D3D"/><path d="M285.5 659.8 H291.5 L289.5 664.3 H282.5 Z" fill="#3D3D3D"/><path d="M303 659.8 H309 L307 664.3 H300 Z" fill="#3D3D3D"/><path d="M320 659.8 H326 L324 664.3 H317 Z" fill="#3D3D3D"/><path d="M337 659.8 H343 L341 664.3 H334 Z" fill="#3D3D3D"/><rect x="291" y="667" width="24" height="1.8" fill="#6A6A6A"/><rect x="287" y="626" width="6.5" height="17.5" fill="#6F6F6F"/><rect x="295" y="614.5" width="6" height="29" fill="#6F6F6F"/><rect x="280" y="632" width="6" height="11.5" fill="#6F6F6F"/><rect x="275" y="643" width="27" height="1" fill="#6F6F6F"/><path d="M255 637 L232.5 649.5" stroke="#0288D1" stroke-width="5.5" stroke-linecap="round"/><circle cx="270.5" cy="626" r="16" fill="#D5D2C8" stroke="#0288D1" stroke-width="3.5"/><rect x="262" y="627" width="8" height="14" fill="#EAE7DD"/><rect x="272" y="620" width="8" height="21" fill="#EAE7DD"/><circle cx="270.5" cy="626" r="16" fill="none" stroke="#0288D1" stroke-width="3.5"/><circle cx="324.5" cy="622" r="6.25" fill="none" stroke="#0288D1" stroke-width="2.50"/><rect x="323.10" y="612.50" width="2.80" height="3.00" fill="#0288D1" transform="rotate(0.0 324.5 622)"/><rect x="323.10" y="612.50" width="2.80" height="3.00" fill="#0288D1" transform="rotate(45.0 324.5 622)"/><rect x="323.10" y="612.50" width="2.80" height="3.00" fill="#0288D1" transform="rotate(90.0 324.5 622)"/><rect x="323.10" y="612.50" width="2.80" height="3.00" fill="#0288D1" transform="rotate(135.0 324.5 622)"/><rect x="323.10" y="612.50" width="2.80" height="3.00" fill="#0288D1" transform="rotate(180.0 324.5 622)"/><rect x="323.10" y="612.50" width="2.80" height="3.00" fill="#0288D1" transform="rotate(225.0 324.5 622)"/><rect x="323.10" y="612.50" width="2.80" height="3.00" fill="#0288D1" transform="rotate(270.0 324.5 622)"/><rect x="323.10" y="612.50" width="2.80" height="3.00" fill="#0288D1" transform="rotate(315.0 324.5 622)"/><circle cx="312" cy="635" r="4.50" fill="none" stroke="#5f5f5f" stroke-width="2.00"/><rect x="310.90" y="628.00" width="2.20" height="2.50" fill="#5f5f5f" transform="rotate(0.0 312 635)"/><rect x="310.90" y="628.00" width="2.20" height="2.50" fill="#5f5f5f" transform="rotate(45.0 312 635)"/><rect x="310.90" y="628.00" width="2.20" height="2.50" fill="#5f5f5f" transform="rotate(90.0 312 635)"/><rect x="310.90" y="628.00" width="2.20" height="2.50" fill="#5f5f5f" transform="rotate(135.0 312 635)"/><rect x="310.90" y="628.00" width="2.20" height="2.50" fill="#5f5f5f" transform="rotate(180.0 312 635)"/><rect x="310.90" y="628.00" width="2.20" height="2.50" fill="#5f5f5f" transform="rotate(225.0 312 635)"/><rect x="310.90" y="628.00" width="2.20" height="2.50" fill="#5f5f5f" transform="rotate(270.0 312 635)"/><rect x="310.90" y="628.00" width="2.20" height="2.50" fill="#5f5f5f" transform="rotate(315.0 312 635)"/><circle cx="325" cy="639" r="3.75" fill="none" stroke="#8DBDE6" stroke-width="1.50"/><rect x="324.10" y="633.20" width="1.80" height="2.30" fill="#8DBDE6" transform="rotate(0.0 325 639)"/><rect x="324.10" y="633.20" width="1.80" height="2.30" fill="#8DBDE6" transform="rotate(45.0 325 639)"/><rect x="324.10" y="633.20" width="1.80" height="2.30" fill="#8DBDE6" transform="rotate(90.0 325 639)"/><rect x="324.10" y="633.20" width="1.80" height="2.30" fill="#8DBDE6" transform="rotate(135.0 325 639)"/><rect x="324.10" y="633.20" width="1.80" height="2.30" fill="#8DBDE6" transform="rotate(180.0 325 639)"/><rect x="324.10" y="633.20" width="1.80" height="2.30" fill="#8DBDE6" transform="rotate(225.0 325 639)"/><rect x="324.10" y="633.20" width="1.80" height="2.30" fill="#8DBDE6" transform="rotate(270.0 325 639)"/><rect x="324.10" y="633.20" width="1.80" height="2.30" fill="#8DBDE6" transform="rotate(315.0 325 639)"/><rect x="340" y="643" width="34" height="49" rx="4" fill="#3D3D3D"/><rect x="342.5" y="647" width="29" height="41" fill="#fff"/><circle cx="360" cy="662" r="5.00" fill="none" stroke="#0288D1" stroke-width="2.00"/><rect x="358.80" y="654.20" width="2.40" height="2.80" fill="#0288D1" transform="rotate(0.0 360 662)"/><rect x="358.80" y="654.20" width="2.40" height="2.80" fill="#0288D1" transform="rotate(45.0 360 662)"/><rect x="358.80" y="654.20" width="2.40" height="2.80" fill="#0288D1" transform="rotate(90.0 360 662)"/><rect x="358.80" y="654.20" width="2.40" height="2.80" fill="#0288D1" transform="rotate(135.0 360 662)"/><rect x="358.80" y="654.20" width="2.40" height="2.80" fill="#0288D1" transform="rotate(180.0 360 662)"/><rect x="358.80" y="654.20" width="2.40" height="2.80" fill="#0288D1" transform="rotate(225.0 360 662)"/><rect x="358.80" y="654.20" width="2.40" height="2.80" fill="#0288D1" transform="rotate(270.0 360 662)"/><rect x="358.80" y="654.20" width="2.40" height="2.80" fill="#0288D1" transform="rotate(315.0 360 662)"/><circle cx="349.5" cy="673.5" r="3.55" fill="none" stroke="#5f5f5f" stroke-width="1.50"/><rect x="348.60" y="667.90" width="1.80" height="2.30" fill="#5f5f5f" transform="rotate(0.0 349.5 673.5)"/><rect x="348.60" y="667.90" width="1.80" height="2.30" fill="#5f5f5f" transform="rotate(45.0 349.5 673.5)"/><rect x="348.60" y="667.90" width="1.80" height="2.30" fill="#5f5f5f" transform="rotate(90.0 349.5 673.5)"/><rect x="348.60" y="667.90" width="1.80" height="2.30" fill="#5f5f5f" transform="rotate(135.0 349.5 673.5)"/><rect x="348.60" y="667.90" width="1.80" height="2.30" fill="#5f5f5f" transform="rotate(180.0 349.5 673.5)"/><rect x="348.60" y="667.90" width="1.80" height="2.30" fill="#5f5f5f" transform="rotate(225.0 349.5 673.5)"/><rect x="348.60" y="667.90" width="1.80" height="2.30" fill="#5f5f5f" transform="rotate(270.0 349.5 673.5)"/><rect x="348.60" y="667.90" width="1.80" height="2.30" fill="#5f5f5f" transform="rotate(315.0 349.5 673.5)"/><circle cx="360.5" cy="677" r="3.05" fill="none" stroke="#8DBDE6" stroke-width="1.30"/><rect x="359.75" y="672.20" width="1.50" height="2.10" fill="#8DBDE6" transform="rotate(0.0 360.5 677)"/><rect x="359.75" y="672.20" width="1.50" height="2.10" fill="#8DBDE6" transform="rotate(45.0 360.5 677)"/><rect x="359.75" y="672.20" width="1.50" height="2.10" fill="#8DBDE6" transform="rotate(90.0 360.5 677)"/><rect x="359.75" y="672.20" width="1.50" height="2.10" fill="#8DBDE6" transform="rotate(135.0 360.5 677)"/><rect x="359.75" y="672.20" width="1.50" height="2.10" fill="#8DBDE6" transform="rotate(180.0 360.5 677)"/><rect x="359.75" y="672.20" width="1.50" height="2.10" fill="#8DBDE6" transform="rotate(225.0 360.5 677)"/><rect x="359.75" y="672.20" width="1.50" height="2.10" fill="#8DBDE6" transform="rotate(270.0 360.5 677)"/><rect x="359.75" y="672.20" width="1.50" height="2.10" fill="#8DBDE6" transform="rotate(315.0 360.5 677)"/><circle cx="357" cy="690" r="0.9" fill="#888"/><text x="454.5" y="629.7" font-family="Liberation Sans" font-weight="700" font-size="32.5" fill="#1B89CC" stroke="#1B89CC" stroke-width="0.8" textLength="329" lengthAdjust="spacingAndGlyphs">Rilheva IIoT Platform</text><text x="454.5" y="662.5" font-family="Liberation Sans" font-size="20" fill="#555" textLength="152.5" lengthAdjust="spacingAndGlyphs">The easy-to-use</text><text x="615" y="662.5" font-family="Liberation Sans" font-weight="700" font-size="20" fill="#4A4A4A" textLength="297" lengthAdjust="spacingAndGlyphs">remote-management platform</text><text x="454.5" y="681.5" font-family="Liberation Sans" font-size="20" fill="#555" textLength="281" lengthAdjust="spacingAndGlyphs">that makes your business IIoT</text><text x="742.8" y="681.5" font-family="Liberation Sans" font-weight="700" font-size="20" fill="#4A4A4A" textLength="56" lengthAdjust="spacingAndGlyphs">ready</text><text x="980.4" y="643.9" font-family="Liberation Sans" font-weight="700" font-size="9" fill="#3C3C3C" textLength="69.6" lengthAdjust="spacingAndGlyphs">DISCOVER MORE</text><text x="980.4" y="660.9" font-family="Liberation Sans" font-weight="700" font-size="15" fill="#1B89CC" textLength="149.4" lengthAdjust="spacingAndGlyphs">WWW.RILHEVA.COM</text></svg>
</body></html>
